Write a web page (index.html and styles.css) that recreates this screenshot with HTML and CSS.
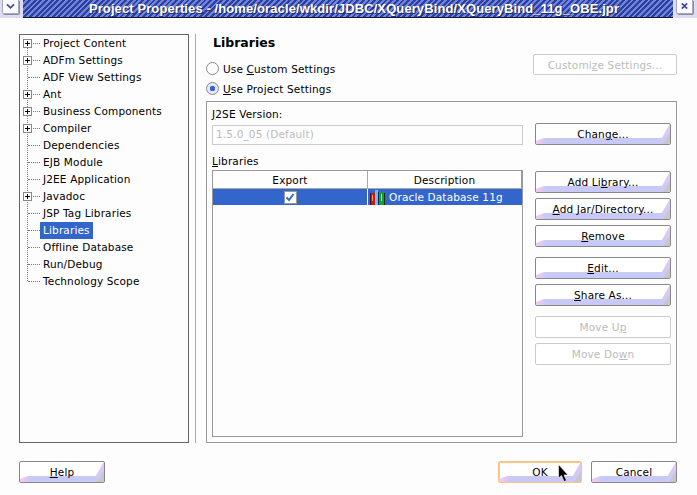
FILE: index.html
```html
<!DOCTYPE html>
<html>
<head>
<meta charset="utf-8">
<title>Project Properties</title>
<link rel="stylesheet" href="styles.css">
</head>
<body>
<div class="window">
  <header class="titlebar">
    <div class="wbtn wbtn-menu"><svg class="wicon" width="17" height="14" viewBox="0 0 17 14"><path d="M4.5 4.5 8.5 8.5 12.5 4.5" fill="none" stroke="#4a4a98" stroke-width="2"/></svg></div>
    <div class="title">Project Properties - /home/oracle/wkdir/JDBC/XQueryBind/XQueryBind_11g_OBE.jpr</div>
    <div class="wbtn wbtn-close"><svg class="wicon" width="17" height="14" viewBox="0 0 17 14"><path d="M5.5 3.5 11.5 9.5M11.5 3.5 5.5 9.5" fill="none" stroke="#4a4a98" stroke-width="2"/></svg></div>
  </header>
  <main class="content">
    <nav class="tree">
      <div class="tree-line"></div>
      <div class="row"><span class="exp"></span><span class="dash"></span><span class="lbl">Project Content</span></div>
      <div class="row"><span class="exp"></span><span class="dash"></span><span class="lbl">ADFm Settings</span></div>
      <div class="row"><span class="dash"></span><span class="lbl">ADF View Settings</span></div>
      <div class="row"><span class="exp"></span><span class="dash"></span><span class="lbl">Ant</span></div>
      <div class="row"><span class="exp"></span><span class="dash"></span><span class="lbl">Business Components</span></div>
      <div class="row"><span class="exp"></span><span class="dash"></span><span class="lbl">Compiler</span></div>
      <div class="row"><span class="dash"></span><span class="lbl">Dependencies</span></div>
      <div class="row"><span class="dash"></span><span class="lbl">EJB Module</span></div>
      <div class="row"><span class="dash"></span><span class="lbl">J2EE Application</span></div>
      <div class="row"><span class="exp"></span><span class="dash"></span><span class="lbl">Javadoc</span></div>
      <div class="row"><span class="dash"></span><span class="lbl">JSP Tag Libraries</span></div>
      <div class="row"><span class="dash"></span><span class="lbl sel">Libraries</span></div>
      <div class="row"><span class="dash"></span><span class="lbl">Offline Database</span></div>
      <div class="row"><span class="dash"></span><span class="lbl">Run/Debug</span></div>
      <div class="row"><span class="dash"></span><span class="lbl">Technology Scope</span></div>
    </nav>
    <div class="sep"></div>
    <section class="main">
      <h1 class="heading">Libraries</h1>
      <div class="options">
        <div class="radios">
          <label class="radio"><span class="rdot"></span><span>Use <u>C</u>ustom Settings</span></label>
          <label class="radio"><span class="rdot on"></span><span><u>U</u>se Project Settings</span></label>
        </div>
        <button class="btn off custom">Customi<u>z</u>e Settings...</button>
      </div>
      <div class="panel">
        <div class="left">
          <div class="label"><u>J</u>2SE Version:</div>
          <div class="input">1.5.0_05 (Default)</div>
          <div class="label lib-label"><u>L</u>ibraries</div>
          <div class="table">
            <div class="thead"><div class="th c1">Export</div><div class="th c2">Description</div></div>
            <div class="tr">
              <div class="td c1"><span class="check"><svg width="10" height="9" viewBox="0 0 10 9"><path d="M1.5 4.5 4 7 8.5 1" fill="none" stroke="#3366cc" stroke-width="2"/></svg></span></div>
              <div class="td c2"><svg class="books" width="16" height="15" viewBox="0 0 16 15"><rect x="1" y="3" width="5" height="12" fill="#c81818"/><rect x="1" y="3" width="1" height="12" fill="#600808"/><rect x="3" y="5" width="1" height="6" fill="#e8a060"/><rect x="6" y="0" width="3" height="15" fill="#58c4fa"/><rect x="9" y="2" width="1" height="13" fill="#102050"/><rect x="10" y="2" width="5" height="13" fill="#12a038"/><rect x="12" y="4" width="1" height="7" fill="#c0e060"/><rect x="15" y="3" width="1" height="12" fill="#103010"/></svg><span>Oracle Database 11g</span></div>
            </div>
          </div>
        </div>
        <div class="side">
          <button class="btn change">Chan<u>g</u>e...</button>
          <div class="group g1">
            <button class="btn">Add Li<u>b</u>rary...</button>
            <button class="btn"><u>A</u>dd Jar/Directory...</button>
            <button class="btn"><u>R</u>emove</button>
          </div>
          <div class="group g2">
            <button class="btn"><u>E</u>dit...</button>
            <button class="btn"><u>S</u>hare As...</button>
          </div>
          <div class="group g2">
            <button class="btn off">Move U<u>p</u></button>
            <button class="btn off">Move Do<u>w</u>n</button>
          </div>
        </div>
      </div>
    </section>
  </main>
  <footer class="footer">
    <button class="btn foot help"><u>H</u>elp</button>
    <div class="foot-right">
      <button class="btn foot ok">OK</button>
      <button class="btn foot cancel">Cancel</button>
    </div>
  </footer>
  <svg class="cursor" width="11" height="19" viewBox="0 0 11 19"><path d="M0.5 0.5V14L3.5 11.5 6 17.5 8.5 16.5 6 11H10Z" fill="#000" stroke="#fff" stroke-width="0.6"/></svg>
</div>
</body>
</html>
```
FILE: styles.css
```css
* { box-sizing: border-box; }
html, body { margin: 0; padding: 0; }
body { width: 697px; height: 495px; overflow: hidden; background: #fdfdfd; font-family: "DejaVu Sans", sans-serif; font-size: 10.5px; letter-spacing: 0.15px; color: #000; }
.window { position: relative; width: 697px; height: 495px; display: flex; flex-direction: column; }
u { text-decoration: underline; text-underline-offset: 1px; }

.titlebar { height: 18px; display: flex; align-items: stretch; background: #dcdcf4; }
.wbtn { display: flex; align-items: flex-start; }
.wbtn-menu { width: 23px; padding-left: 2px; }
.wbtn-close { width: 24px; padding-left: 3px; }
.wicon { display: block; background: #fbfbff; border: 1px solid #a8a8b8; border-top: 0; border-radius: 0 0 2px 2px; box-shadow: 1px 1px 0 #8a8aa0; }
.title { flex: 1; height: 18px; padding-left: 12px; line-height: 17px; text-align: center; color: #fff; font-family: "Liberation Sans", sans-serif; font-weight: bold; font-size: 13px; letter-spacing: 0.1px; white-space: nowrap; overflow: hidden; text-shadow: 1px 1px 0 #202a60;
  background: repeating-linear-gradient(135deg, #2f3f9c 0 2px, #6f84dc 2px 4px); border-bottom: 1px solid #10183a; }

.content { height: 409px; margin: 16px 20px 0 19px; display: flex; }
.tree { position: relative; width: 170px; border: 1px solid #666; }
.tree-line { position: absolute; left: 7px; top: 8px; height: 238px; border-left: 1px dotted #777; }
.row { position: relative; height: 17px; display: flex; align-items: center; padding-left: 20px; white-space: nowrap; }
.dash { position: absolute; left: 8px; top: 8px; width: 12px; border-top: 1px dotted #777; }
.exp { position: absolute; z-index: 1; left: 3px; top: 4px; width: 9px; height: 9px; border: 1px solid #888; background:
  linear-gradient(#000,#000) center/5px 1px no-repeat, linear-gradient(#000,#000) center/1px 5px no-repeat, #fff; }
.lbl { padding: 0 3px; height: 17px; line-height: 16px; }
.lbl.sel { background: #3366cc; color: #fff; }

.sep { width: 1px; margin-left: 6px; background: #aaa; }
.main { flex: 1; margin-left: 10px; min-width: 0; display: flex; flex-direction: column; }
.heading { margin: 0 0 0 7px; height: 21px; font-size: 12.5px; font-weight: bold; line-height: 18px; letter-spacing: 0; }
.options { display: flex; justify-content: space-between; height: 46px; }
.radios { display: flex; flex-direction: column; gap: 7px; padding-top: 7px; }
.radio { display: flex; align-items: center; gap: 4px; height: 13px; }
.rdot { width: 13px; height: 13px; border-radius: 50%; border: 1px solid #888; background: #fff; }
.rdot.on { background: radial-gradient(circle, #3366cc 0 2.5px, #e8e8f4 3px); }
.btn { position: relative; isolation: isolate; display: block; width: 136px; height: 22px; padding: 0; border: 1px solid #888; border-radius: 2px; background: #fff; font: inherit; letter-spacing: inherit; color: #000; white-space: nowrap; overflow: hidden; text-align: center; }
.btn::before { content: ""; position: absolute; z-index: -1; inset: 0; background: linear-gradient(#e8c8f4, #c9c9f8) right / 8px 100% no-repeat, linear-gradient(90deg, #f0c8f0 0 3px, #c9c9f8 10px); clip-path: polygon(0 100%, 0 calc(100% - 3px), 8px calc(100% - 6px), calc(100% - 8px) calc(100% - 6px), 100% 0, 100% 100%); }
.btn::after { content: ""; position: absolute; z-index: -1; inset: 0; background: #c8c8c8; clip-path: polygon(calc(100% - 7px) 100%, 100% calc(100% - 11px), 100% 100%); }
.btn.off { border-color: #ccc; color: #bbb; }
.btn.off::before, .btn.off::after { display: none; }
.custom { width: 144px; height: 21px; margin-top: -1px; }

.panel { flex: 1; display: flex; border: 1px solid #999; padding: 0 5px 5px 5px; }
.left { width: 311px; display: flex; flex-direction: column; }
.label { height: 16px; line-height: 12px; margin-top: 6px; }
.input { height: 20px; margin-top: 1px; border: 1px solid #ccc; color: #bbb; line-height: 16px; padding-left: 3px; }
.lib-label { margin-top: 10px; height: 15px; }
.table { flex: 1; border: 1px solid #999; }
.thead { display: flex; height: 18px; background: #fff; border-bottom: 1px solid #aaa; border-right: 1px solid #999; }
.th { line-height: 18px; text-align: center; }
.c1 { width: 155px; border-right: 1px solid #aaa; }
.c2 { flex: 1; }
.tr { display: flex; height: 16px; background: #3366cc; color: #fff; }
.td { display: flex; align-items: center; }
.td.c1 { justify-content: center; border-right: 1px solid #fff; }
.td.c2 { padding-left: 1px; gap: 4px; }
.check { width: 13px; height: 13px; background: #fff; border: 1px solid #999; display: flex; align-items: center; justify-content: center; }
.books { flex: none; }

.side { margin-left: 12px; width: 136px; display: flex; flex-direction: column; }
.change { margin-top: 21px; }
.group { display: flex; flex-direction: column; gap: 5px; }
.g1 { margin-top: 26px; }
.g2 { margin-top: 10px; }

.footer { display: flex; justify-content: space-between; margin: 18px 20px 0 19px; }
.foot { height: 22px; }
.help { width: 86px; }
.foot-right { display: flex; gap: 9px; }
.ok { width: 84px; border: 1px solid #ffc080; box-shadow: inset 0 0 0 1px #ffc888; }
.cancel { width: 86px; }
.cursor { position: absolute; left: 558px; top: 464px; }
```
